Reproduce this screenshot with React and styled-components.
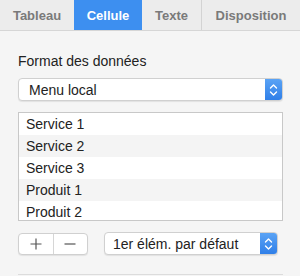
import React from 'react'
import styled, { createGlobalStyle } from 'styled-components'

const GlobalStyle = createGlobalStyle`
  html, body {
    margin: 0;
    padding: 0;
    background: #f5f5f5;
  }
  body {
    font-family: 'Liberation Sans', Arial, sans-serif;
    font-size: 14px;
    color: #222;
  }
`

const Panel = styled.div`
  width: 300px;
  height: 276px;
  overflow: hidden;
  background: #f5f5f5;
`

const TabBar = styled.div`
  display: flex;
  height: 31px;
  background: #ececec;
  border-bottom: 1px solid #d6d6d6;
  box-sizing: border-box;
`

const Tab = styled.div`
  flex: 0 0 ${p => p.w}px;
  display: flex;
  align-items: center;
  justify-content: center;
  font-size: 13px;
  font-weight: bold;
  color: ${p => (p.active ? '#fff' : '#7a7a7a')};
  background: ${p => (p.active ? '#3d8ff0' : 'transparent')};
  border-right: ${p => (p.divider ? '1px solid #d3d3d3' : 'none')};
  box-sizing: border-box;
`

const Body = styled.div`
  padding: 22px 17px 0 18px;
  display: flex;
  flex-direction: column;
`

const Label = styled.div`
  font-size: 14px;
  line-height: 17px;
  color: #222;
  margin-bottom: 8px;
`

const SelectBox = styled.div`
  display: flex;
  align-items: center;
  height: 23px;
  width: ${p => p.w}px;
  box-sizing: border-box;
  background: #fff;
  border: 1px solid #d0d0d0;
  border-radius: 4px;
  box-shadow: 0 1px 1px rgba(0, 0, 0, 0.08);
  overflow: hidden;
`

const SelectText = styled.span`
  flex: 1;
  padding-left: ${p => p.pad}px;
  font-size: 14px;
  color: #222;
  white-space: nowrap;
`

const Stepper = styled.div`
  width: 17px;
  align-self: stretch;
  background: linear-gradient(#5aa3f5, #2f7fe8);
  display: flex;
  align-items: center;
  justify-content: center;
`

const List = styled.div`
  margin-top: 11px;
  height: 109px;
  box-sizing: border-box;
  border: 1px solid #c8c8c8;
  background: #fff;
  overflow: hidden;
`

const Row = styled.div`
  height: 22px;
  line-height: 22px;
  padding-left: 7px;
  font-size: 14px;
  color: #222;
  background: ${p => (p.odd ? '#f4f4f4' : '#fff')};
`

const Controls = styled.div`
  display: flex;
  align-items: center;
  gap: 16px;
  margin-top: 11px;
`

const Segmented = styled.div`
  display: flex;
  height: 22px;
  width: 70px;
  box-sizing: border-box;
  background: #fff;
  border: 1px solid #d0d0d0;
  border-radius: 4px;
  box-shadow: 0 1px 1px rgba(0, 0, 0, 0.08);
`

const SegButton = styled.div`
  flex: 1;
  display: flex;
  align-items: center;
  justify-content: center;
  border-right: ${p => (p.first ? '1px solid #d6d6d6' : 'none')};
`

const Separator = styled.div`
  margin-top: 19px;
  height: 1px;
  background: #dcdcdc;
`

const Arrows = () => (
  <svg width="9" height="14" viewBox="0 0 9 14">
    <path d="M1.5 5 L4.5 2 L7.5 5 M1.5 9 L4.5 12 L7.5 9" fill="none" stroke="#fff" strokeWidth="1.4" strokeLinecap="round" strokeLinejoin="round" />
  </svg>
)

const Plus = () => (
  <svg width="12" height="12" viewBox="0 0 12 12">
    <path d="M6 0.5 V11.5 M0.5 6 H11.5" stroke="#555" strokeWidth="1.2" />
  </svg>
)

const Minus = () => (
  <svg width="12" height="12" viewBox="0 0 12 12">
    <path d="M0.5 6 H11.5" stroke="#555" strokeWidth="1.2" />
  </svg>
)

const tabs = [
  { name: 'Tableau', w: 74, divider: false },
  { name: 'Cellule', w: 68, active: true },
  { name: 'Texte', w: 60, divider: true },
  { name: 'Disposition', w: 98 },
]

const items = ['Service 1', 'Service 2', 'Service 3', 'Produit 1', 'Produit 2']

export default function App() {
  return (
    <Panel>
      <GlobalStyle />
      <TabBar>
        {tabs.map(t => (
          <Tab key={t.name} w={t.w} active={t.active} divider={t.divider}>
            {t.name}
          </Tab>
        ))}
      </TabBar>
      <Body>
        <Label>Format des données</Label>
        <SelectBox w={265}>
          <SelectText pad={10}>Menu local</SelectText>
          <Stepper><Arrows /></Stepper>
        </SelectBox>
        <List>
          {items.map((it, i) => (
            <Row key={it} odd={i % 2 === 1}>{it}</Row>
          ))}
        </List>
        <Controls>
          <Segmented>
            <SegButton first><Plus /></SegButton>
            <SegButton><Minus /></SegButton>
          </Segmented>
          <SelectBox w={174}>
            <SelectText pad={8}>1er élém. par défaut</SelectText>
            <Stepper><Arrows /></Stepper>
          </SelectBox>
        </Controls>
        <Separator />
      </Body>
    </Panel>
  )
}
